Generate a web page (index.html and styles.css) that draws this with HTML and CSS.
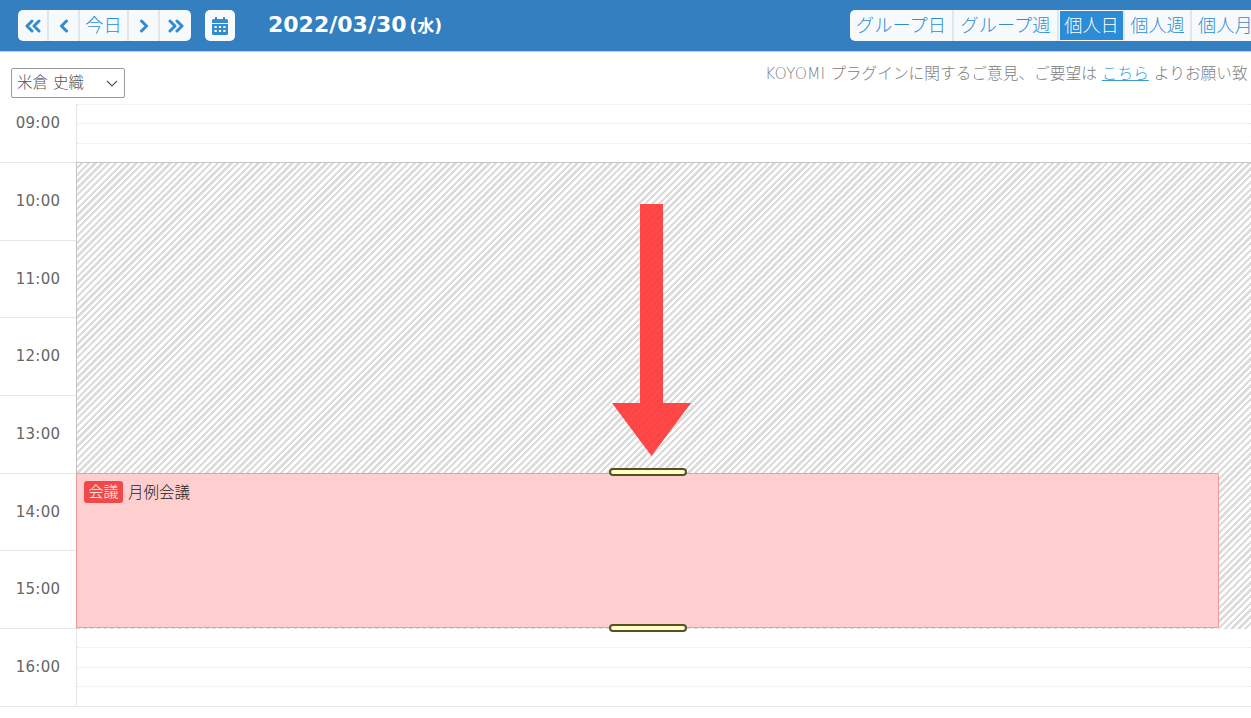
FILE: index.html
```html
<!DOCTYPE html>
<html lang="ja">
<head>
<meta charset="utf-8">
<title>KOYOMI</title>
<link rel="stylesheet" href="styles.css">
</head>
<body>
<header class="topbar">
  <div class="btn-group nav-group">
    <button class="btn icon-btn"><svg width="18" height="14" viewBox="0 0 18 14"><path d="M8 2 3 7l5 5M15 2l-5 5 5 5" class="chev"/></svg></button>
    <button class="btn icon-btn"><svg width="10" height="14" viewBox="0 0 10 14"><path d="M7.500 2 2.500 7l5 5" class="chev"/></svg></button>
    <button class="btn today"><span class="lift">今日</span></button>
    <button class="btn icon-btn"><svg width="10" height="14" viewBox="0 0 10 14"><path d="M2.500 2l5 5-5 5" class="chev"/></svg></button>
    <button class="btn icon-btn"><svg width="18" height="14" viewBox="0 0 18 14"><path d="M3 2l5 5-5 5M10 2l5 5-5 5" class="chev"/></svg></button>
  </div>
  <button class="btn cal-btn"><svg width="16" height="18" viewBox="0 0 16 18"><path fill="#338bd0" d="M3 0h2v2h6V0h2v2h1.500A1.500 1.500 0 0 1 16 3.500V6H0V3.500A1.500 1.500 0 0 1 1.500 2H3zM0 7h16v9.500a1.500 1.500 0 0 1-1.500 1.500h-13A1.500 1.500 0 0 1 0 16.500z"/><path fill="#fff" d="M2.500 9h2.200v2H2.500zM6.900 9h2.200v2H6.900zM11.300 9h2.200v2h-2.200zM2.500 13h2.200v2H2.500zM6.900 13h2.200v2H6.900zM11.300 13h2.200v2h-2.200z"/></svg></button>
  <h1 class="date">2022/03/30<span class="dow">(水)</span></h1>
  <div class="btn-group view-group">
    <button class="btn view"><span class="lift">グループ日</span></button>
    <button class="btn view"><span class="lift">グループ週</span></button>
    <button class="btn view active"><span class="lift">個人日</span></button>
    <button class="btn view"><span class="lift">個人週</span></button>
    <button class="btn view last"><span class="lift">個人月</span></button>
  </div>
</header>
<section class="subbar">
  <div class="select"><span>米倉 史織</span><svg width="12" height="7" viewBox="0 0 12 7"><path d="M1 1l5 5 5-5" fill="none" stroke="#555" stroke-width="1.200"/></svg></div>
  <p class="notice">KOYOMI プラグインに関するご意見、ご要望は <a href="#">こちら</a> よりお願い致します。</p>
</section>
<main class="schedule">
  <div class="rows">
    <div class="row"><div class="time">09:00</div><div class="slots"><i></i><i></i><i></i><i></i></div></div>
    <div class="row"><div class="time">10:00</div><div class="slots"><i></i><i></i><i></i><i></i></div></div>
    <div class="row"><div class="time">11:00</div><div class="slots"><i></i><i></i><i></i><i></i></div></div>
    <div class="row"><div class="time">12:00</div><div class="slots"><i></i><i></i><i></i><i></i></div></div>
    <div class="row"><div class="time">13:00</div><div class="slots"><i></i><i></i><i></i><i></i></div></div>
    <div class="row"><div class="time">14:00</div><div class="slots"><i></i><i></i><i></i><i></i></div></div>
    <div class="row"><div class="time">15:00</div><div class="slots"><i></i><i></i><i></i><i></i></div></div>
    <div class="row"><div class="time">16:00</div><div class="slots"><i></i><i></i><i></i><i></i></div></div>
  </div>
  <div class="hatch"></div>
  <div class="event">
    <span class="tag">会議</span><span class="event-title">月例会議</span>
  </div>
  <div class="handle handle-top"></div>
  <div class="handle handle-bottom"></div>
  <svg class="arrow" width="80" height="252" viewBox="0 0 80 252"><polygon points="28,0 51,0 51,199 79,199 39.500,252 0,199 28,199" fill="#ff3030" fill-opacity=".88"/></svg>
</main>
</body>
</html>
```
FILE: styles.css
```css
* { box-sizing: border-box; }
html, body { margin: 0; height: 100%; overflow: hidden; }
body { background: #fff; color: #555; font-family: "DejaVu Sans", "Noto Sans CJK JP", sans-serif; }

.topbar { height: 52px; background: #337fbf; border-bottom: 1px solid #a9d4f2; display: flex; align-items: flex-start; padding-top: 10px; padding-left: 18px; overflow: hidden; }
.btn-group { display: flex; flex: none; }
.btn { border: 0; margin: 0; padding: 0; background: #f7fafc; color: #338bd0; display: flex; align-items: center; justify-content: center; height: 31px; font-family: "Noto Sans CJK JP", sans-serif; font-size: 18.200px; font-weight: 300; }
.lift { display: block; margin-top: -4px; }
.nav-group .btn { border-right: 2px solid #dfe6ec; }
.nav-group .btn:first-child { border-radius: 5px 0 0 5px; }
.nav-group .btn:last-child { border-radius: 0 5px 5px 0; border-right: 0; }
.icon-btn { width: 31px; }
.today { width: 49px; }
.chev { fill: none; stroke: #338bd0; stroke-width: 3; stroke-linecap: round; stroke-linejoin: round; }
.cal-btn { width: 30px; margin-left: 14px; border-radius: 5px; flex: none; }
.date { margin: 0 0 0 33px; flex: none; width: 582px; color: #fff; font-size: 22px; font-weight: 700; line-height: 29px; white-space: nowrap; }
.dow { font-size: 17px; margin-left: 3px; }
.view { padding: 0 6px; border-right: 2px solid #dfe6ec; white-space: nowrap; }
.view:first-child { border-radius: 5px 0 0 5px; width: 104px; }
.view:nth-child(2) { width: 105px; }
.view:nth-child(3) { width: 66px; }
.view:nth-child(4) { width: 67px; }
.view.active { background: #2e8bd6; color: #fff; border: 1px solid #f7fafc; border-right: 2px solid #dfe6ec; }
.view.last { border-right: 0; width: 66px; justify-content: flex-start; }

.subbar { height: 52px; display: flex; justify-content: space-between; align-items: flex-start; padding-left: 11px; overflow: hidden; }
.select { width: 114px; height: 30px; margin-top: 16px; flex: none; border: 1px solid #999; border-radius: 2px; display: flex; align-items: center; justify-content: space-between; padding: 0 6px 0 5px; font-family: "DejaVu Sans", "Noto Sans CJK JP", sans-serif; font-size: 15.500px; font-weight: 300; color: #555; }
.select span { margin-top: -4px; }
.notice { margin: 11px 0 0; width: 486px; flex: none; white-space: nowrap; overflow: hidden; font-family: "DejaVu Sans", "Noto Sans CJK JP", sans-serif; font-size: 15.700px; font-weight: 300; line-height: 22px; color: #808080; }
.notice a { color: #3a9bd9; text-decoration: underline; }

.schedule { position: relative; height: 614px; overflow: hidden; }
.rows { margin-top: -18.700px; }
.row { height: 77.670px; display: flex; }
.time { width: 77px; flex: none; border-bottom: 1px solid #e6e6e6; border-right: 1px solid #e6e6e6; font-size: 15px; letter-spacing: .3px; line-height: 77.500px; text-align: center; color: #666; }
.slots { flex: 1; display: flex; flex-direction: column; border-bottom: 1px solid #e6e6e6; }
.slots i { display: block; flex: 1; border-bottom: 1px dotted #e8e8e8; }
.slots i:last-child { border-bottom: 0; }

.hatch { position: absolute; left: 76px; right: 0; top: 58px; height: 467px; border-top: 1px solid #c4c4c4; border-left: 1px solid #c4c4c4; background: repeating-linear-gradient(135deg, #fff 0, #fff 2.400px, #dcdcdc 2.400px, #dcdcdc 4.800px); }
.event { position: absolute; left: 76px; top: 369px; width: 1143px; height: 155px; background: #ffcfcf; border: 1px solid #f29a9a; border-radius: 2px; padding: 7px 7px; display: flex; align-items: flex-start; font-family: "Noto Sans CJK JP", sans-serif; font-size: 15.500px; color: #333; }
.tag { background: #f24848; color: #fff; font-size: 15px; font-weight: 300; line-height: 19px; height: 22px; width: 39px; text-align: center; border-radius: 3px; margin-right: 5px; }
.event-title { line-height: 20px; font-weight: 300; color: #222; }
.handle { position: absolute; left: 609px; width: 78px; height: 8px; background: #ffffc0; border: 2px solid #55502a; border-radius: 4px; }
.handle-top { top: 364px; }
.handle-bottom { top: 520px; }
.arrow { position: absolute; left: 612px; top: 100px; }
```
